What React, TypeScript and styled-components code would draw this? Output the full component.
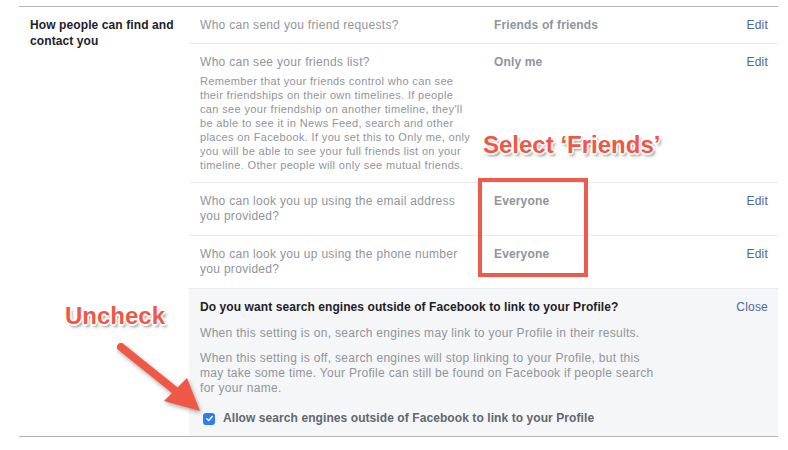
import React from "react";
import styled, { createGlobalStyle } from "styled-components";

const Global = createGlobalStyle`
  html, body { margin: 0; padding: 0; background: #ffffff; }
  body { font-family: "Liberation Sans", Arial, sans-serif; -webkit-font-smoothing: antialiased; }
`;

const Page = styled.div`
  position: relative;
  width: 788px;
  height: 450px;
  padding: 6px 10px 0 19px;
  box-sizing: border-box;
  overflow: hidden;
`;

const Section = styled.section`
  display: grid;
  grid-template-columns: 170px 1fr;
  width: 759px;
  border-top: 1px solid #b4b4b4;
  border-bottom: 1px solid #b4b4b4;
`;

const SectionLabel = styled.div`
  padding: 10px 10px 0 11px;
  font-size: 12px;
  line-height: 16px;
  font-weight: 700;
  letter-spacing: 0.1px;
  color: #1d2129;
`;

const Rows = styled.div`
  display: flex;
  flex-direction: column;
`;

const Row = styled.div<{ $padBottom: number }>`
  display: grid;
  grid-template-columns: 294px 1fr auto;
  padding: 11px 10px ${(p) => p.$padBottom}px 11px;
  border-bottom: 1px solid #e9ebee;
  font-size: 12px;
  line-height: 15px;
`;

const Question = styled.div`
  color: #90949c;
  letter-spacing: 0.3px;
`;

const Description = styled.p`
  margin: 4px 0 0;
  font-size: 11px;
  line-height: 14px;
  letter-spacing: 0.35px;
  color: #90949c;
`;

const Value = styled.div`
  font-weight: 700;
  letter-spacing: 0.15px;
  color: #90949c;
`;

const LinkText = styled.a`
  color: #4b67a1;
  text-decoration: none;
  letter-spacing: 0.2px;
  cursor: pointer;
`;

const Panel = styled.div`
  background: #f5f6f7;
  padding: 11px 10px 10px 11px;
  font-size: 12px;
  line-height: 15px;
`;

const PanelHeader = styled.div`
  display: flex;
  justify-content: space-between;
  align-items: baseline;
`;

const PanelTitle = styled.div`
  font-weight: 700;
  letter-spacing: 0.08px;
  color: #1d2129;
`;

const PanelText = styled.p<{ $gap: number }>`
  margin: ${(p) => p.$gap}px 0 0;
  letter-spacing: 0.3px;
  color: #90949c;
`;

const CheckRow = styled.label`
  display: flex;
  align-items: center;
  gap: 8px;
  margin-top: 15px;
  margin-left: 3px;
  font-weight: 700;
  letter-spacing: 0.08px;
  color: #606770;
`;

const CheckBox = styled.span`
  display: inline-flex;
  align-items: center;
  justify-content: center;
  width: 12px;
  height: 12px;
  border-radius: 3px;
  background: #2f7cf6;
`;

const Callout = styled.div<{ $left: number; $top: number }>`
  position: absolute;
  left: ${(p) => p.$left}px;
  top: ${(p) => p.$top}px;
  font-family: "Liberation Sans", Arial, sans-serif;
  font-weight: 700;
  font-size: 24px;
  line-height: 28px;
  color: #ef5747;
  white-space: nowrap;
  text-shadow:
    1.5px 0 0 #fff, -1.5px 0 0 #fff, 0 1.5px 0 #fff, 0 -1.5px 0 #fff,
    1px 1px 0 #fff, -1px -1px 0 #fff, 1px -1px 0 #fff, -1px 1px 0 #fff,
    2px 3px 3px rgba(0, 0, 0, 0.45);
`;

const HighlightBox = styled.div`
  position: absolute;
  left: 478px;
  top: 178px;
  width: 110px;
  height: 99px;
  box-sizing: border-box;
  border: 4px solid #f05a4a;
`;

const ArrowSvg = styled.svg`
  position: absolute;
  left: 0;
  top: 0;
  pointer-events: none;
  filter: drop-shadow(1px 2px 2px rgba(0, 0, 0, 0.35));
`;

export default function App() {
  return (
    <>
      <Global />
      <Page>
        <Section>
          <SectionLabel>
            How people can find and
            <br />
            contact you
          </SectionLabel>
          <Rows>
            <Row $padBottom={10}>
              <Question>Who can send you friend requests?</Question>
              <Value>Friends of friends</Value>
              <LinkText>Edit</LinkText>
            </Row>
            <Row $padBottom={10}>
              <div>
                <Question>Who can see your friends list?</Question>
                <Description>
                  Remember that your friends control who can see
                  <br />
                  their friendships on their own timelines. If people
                  <br />
                  can see your friendship on another timeline, they'll
                  <br />
                  be able to see it in News Feed, search and other
                  <br />
                  places on Facebook. If you set this to Only me, only
                  <br />
                  you will be able to see your full friends list on your
                  <br />
                  timeline. Other people will only see mutual friends.
                </Description>
              </div>
              <Value>Only me</Value>
              <LinkText>Edit</LinkText>
            </Row>
            <Row $padBottom={11}>
              <Question>
                Who can look you up using the email address
                <br />
                you provided?
              </Question>
              <Value>Everyone</Value>
              <LinkText>Edit</LinkText>
            </Row>
            <Row $padBottom={11}>
              <Question>
                Who can look you up using the phone number
                <br />
                you provided?
              </Question>
              <Value>Everyone</Value>
              <LinkText>Edit</LinkText>
            </Row>
            <Panel>
              <PanelHeader>
                <PanelTitle>
                  Do you want search engines outside of Facebook to link to your Profile?
                </PanelTitle>
                <LinkText>Close</LinkText>
              </PanelHeader>
              <PanelText $gap={11}>
                When this setting is on, search engines may link to your Profile in their results.
              </PanelText>
              <PanelText $gap={10}>
                When this setting is off, search engines will stop linking to your Profile, but this
                <br />
                may take some time. Your Profile can still be found on Facebook if people search
                <br />
                for your name.
              </PanelText>
              <CheckRow>
                <CheckBox>
                  <svg width="9" height="9" viewBox="0 0 10 10">
                    <path
                      d="M2 5.2 L4.2 7.3 L8 2.8"
                      fill="none"
                      stroke="#fff"
                      strokeWidth="1.6"
                      strokeLinecap="round"
                      strokeLinejoin="round"
                    />
                  </svg>
                </CheckBox>
                Allow search engines outside of Facebook to link to your Profile
              </CheckRow>
            </Panel>
          </Rows>
        </Section>

        <HighlightBox />
        <Callout $left={483} $top={131}>Select ‘Friends’</Callout>
        <Callout $left={65} $top={302}>Uncheck</Callout>
        <ArrowSvg width="788" height="450" viewBox="0 0 788 450">
          <line x1="121" y1="347" x2="177" y2="392" stroke="#ef5747" strokeWidth="8" strokeLinecap="round" />
          <polygon points="200,411 187,378 164,401" fill="#ef5747" />
        </ArrowSvg>
      </Page>
    </>
  );
}
